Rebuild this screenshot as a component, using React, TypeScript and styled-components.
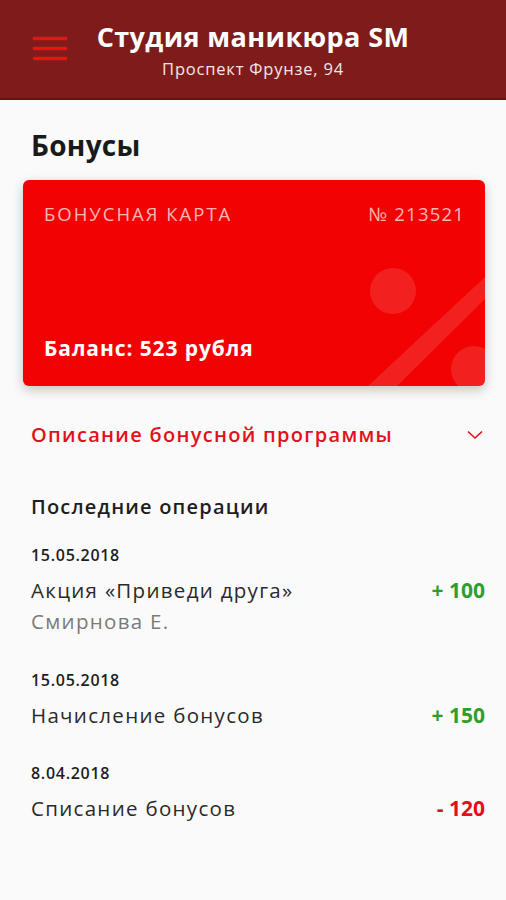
import React from "react";
import styled, { createGlobalStyle } from "styled-components";

const Global = createGlobalStyle`
  html, body { margin: 0; padding: 0; background: #fafafa; }
  body { font-family: "Open Sans", "Liberation Sans", sans-serif; -webkit-font-smoothing: antialiased; }
  * { box-sizing: border-box; }
`;

const Screen = styled.div`
  width: 506px;
  min-height: 900px;
  background: #fafafa;
  display: flex;
  flex-direction: column;
`;

const Header = styled.header`
  height: 100px;
  background: #7e1c1c;
  border-bottom: 2px solid #6b1010;
  display: grid;
  grid-template-columns: 90px 1fr 90px;
  align-items: center;
`;

const Burger = styled.div`
  justify-self: start;
  margin-left: 33px;
  margin-top: -2px;
  width: 34px;
  display: flex;
  flex-direction: column;
  gap: 7px;
`;

const BurgerLine = styled.span`
  display: block;
  height: 3px;
  background: #ee1111;
  border-radius: 1px;
  box-shadow: 0 0 2px rgba(255, 30, 30, 0.6);
`;

const TitleBlock = styled.div`
  display: flex;
  flex-direction: column;
  align-items: center;
  margin-top: 3px;
`;

const Title = styled.h1`
  margin: 0;
  color: #fff;
  font-size: 27px;
  font-weight: 700;
  letter-spacing: 0.4px;
  line-height: 32px;
  white-space: nowrap;
`;

const Subtitle = styled.div`
  color: #f3e6e6;
  font-size: 16.5px;
  letter-spacing: 0.8px;
  line-height: 22px;
  margin-top: 5px;
  white-space: nowrap;
`;

const Content = styled.main`
  padding: 26px 21px 0 23px;
  display: flex;
  flex-direction: column;
`;

const PageTitle = styled.h2`
  margin: 0 0 0 8px;
  font-size: 28px;
  font-weight: 700;
  letter-spacing: 0.3px;
  color: #1a1a1a;
  line-height: 38px;
`;

const Card = styled.section`
  position: relative;
  overflow: hidden;
  margin-top: 16px;
  height: 206px;
  background: #f20202;
  border-radius: 6px;
  box-shadow: 0 4px 12px rgba(0, 0, 0, 0.22);
  padding: 22px 20px 24px 21px;
  display: flex;
  flex-direction: column;
  justify-content: space-between;
`;

const CardTop = styled.div`
  position: relative;
  z-index: 1;
  display: flex;
  justify-content: space-between;
  color: rgba(255, 255, 255, 0.72);
  font-size: 18.5px;
  line-height: 24px;
`;

const CardLabel = styled.span<{ $spacing: number }>`
  letter-spacing: ${(p) => p.$spacing}px;
`;

const Balance = styled.div`
  position: relative;
  z-index: 1;
  color: #fff;
  font-size: 21px;
  font-weight: 700;
  letter-spacing: 0.9px;
  line-height: 28px;
`;

const Decor = styled.svg`
  position: absolute;
  right: 0;
  bottom: 0;
  width: 140px;
  height: 130px;
`;

const Accordion = styled.div`
  margin-top: 34px;
  padding: 0 2px 0 8px;
  display: flex;
  align-items: center;
  justify-content: space-between;
  color: #e3101c;
  font-size: 20px;
  font-weight: 600;
  letter-spacing: 1.3px;
  line-height: 30px;
`;

const SectionTitle = styled.h3`
  margin: 42px 0 0 8px;
  font-size: 20px;
  font-weight: 600;
  letter-spacing: 1.2px;
  color: #1e1e1e;
  line-height: 30px;
`;

const Operation = styled.div<{ $gap: number }>`
  margin-top: ${(p) => p.$gap}px;
  padding-left: 8px;
  display: flex;
  flex-direction: column;
`;

const DateLine = styled.div`
  font-size: 16px;
  font-weight: 600;
  letter-spacing: 0.7px;
  color: #1e1e1e;
  line-height: 22px;
`;

const OpRow = styled.div`
  margin-top: 10px;
  display: flex;
  justify-content: space-between;
  align-items: flex-start;
`;

const OpText = styled.div`
  display: flex;
  flex-direction: column;
`;

const OpName = styled.div`
  font-size: 20.5px;
  letter-spacing: 1.3px;
  color: #2a2a2a;
  line-height: 28px;
`;

const OpSub = styled.div`
  font-size: 20.5px;
  letter-spacing: 1.3px;
  color: #7a7a7a;
  line-height: 28px;
  margin-top: 3px;
`;

const Amount = styled.div<{ $neg?: boolean }>`
  font-size: 21px;
  font-weight: 700;
  line-height: 28px;
  color: ${(p) => (p.$neg ? "#e3101c" : "#2f9e2f")};
`;

const ops = [
  { date: "15.05.2018", name: "Акция «Приведи друга»", sub: "Смирнова Е.", amount: "+ 100", neg: false, gap: 22 },
  { date: "15.05.2018", name: "Начисление бонусов", amount: "+ 150", neg: false, gap: 34 },
  { date: "8.04.2018", name: "Списание бонусов", amount: "- 120", neg: true, gap: 33 },
];

export default function App() {
  return (
    <Screen>
      <Global />
      <Header>
        <Burger>
          <BurgerLine />
          <BurgerLine />
          <BurgerLine />
        </Burger>
        <TitleBlock>
          <Title>Студия маникюра SM</Title>
          <Subtitle>Проспект Фрунзе, 94</Subtitle>
        </TitleBlock>
        <div />
      </Header>
      <Content>
        <PageTitle>Бонусы</PageTitle>
        <Card>
          <Decor viewBox="0 0 140 130">
            <circle cx="48" cy="35" r="23" fill="rgba(255,255,255,0.12)" />
            <polygon points="140,21 140,43 52,130 23,130" fill="rgba(255,255,255,0.12)" />
            <circle cx="129" cy="113" r="23" fill="rgba(255,255,255,0.12)" />
          </Decor>
          <CardTop>
            <CardLabel $spacing={2}>БОНУСНАЯ КАРТА</CardLabel>
            <CardLabel $spacing={1.2}>№ 213521</CardLabel>
          </CardTop>
          <Balance>Баланс: 523 рубля</Balance>
        </Card>
        <Accordion>
          <span>Описание бонусной программы</span>
          <svg width="16" height="10" viewBox="0 0 16 10">
            <polyline points="1,1.5 8,8 15,1.5" fill="none" stroke="#e3101c" strokeWidth="1.6" />
          </svg>
        </Accordion>
        <SectionTitle>Последние операции</SectionTitle>
        {ops.map((o, i) => (
          <Operation key={i} $gap={o.gap}>
            <DateLine>{o.date}</DateLine>
            <OpRow>
              <OpText>
                <OpName>{o.name}</OpName>
                {o.sub && <OpSub>{o.sub}</OpSub>}
              </OpText>
              <Amount $neg={o.neg}>{o.amount}</Amount>
            </OpRow>
          </Operation>
        ))}
      </Content>
    </Screen>
  );
}
